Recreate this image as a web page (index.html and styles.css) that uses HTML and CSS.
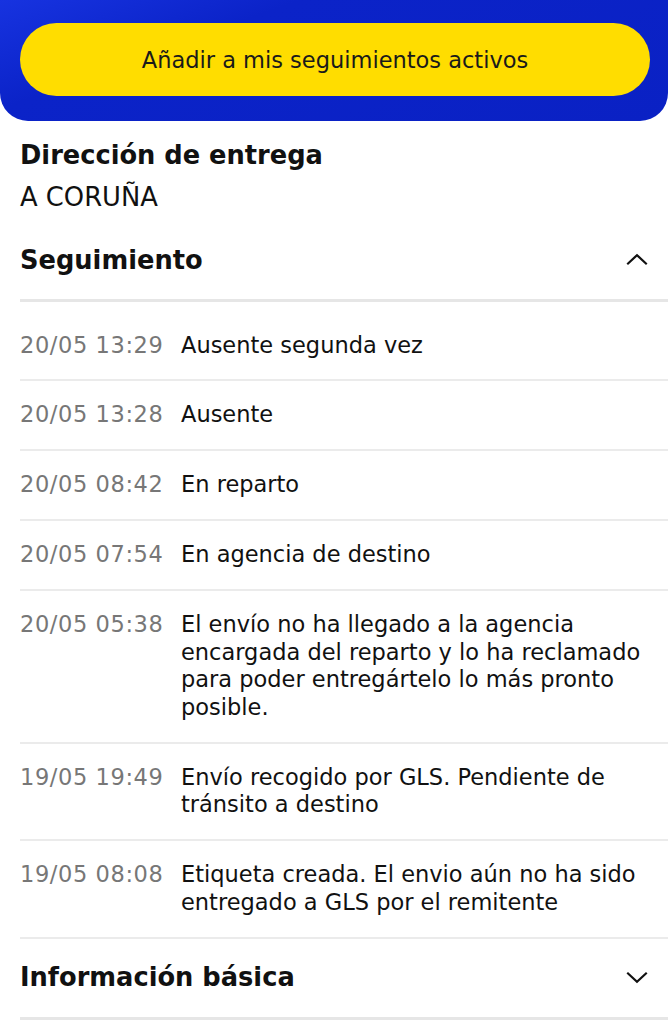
FILE: index.html
```html
<!DOCTYPE html>
<html lang="es">
<head>
    <meta charset="UTF-8">
    <meta name="viewport" content="width=device-width, initial-scale=1.0">
    <title>Seguimiento de envío</title>
    <link rel="stylesheet" href="styles.css">
</head>
<body>
    <header class="top-bar">
        <button class="follow-btn" type="button">Añadir a mis seguimientos activos</button>
    </header>

    <section class="address">
        <h2>Dirección de entrega</h2>
        <p>A CORUÑA</p>
    </section>

    <section class="panel">
        <div class="panel-head open">
            <h2>Seguimiento</h2>
            <svg class="chevron" viewBox="0 0 24 24" width="26" height="26">
                <path d="M3 16 L12 7.5 L21 16" fill="none" stroke="#111" stroke-width="2"/>
            </svg>
        </div>
        <ul class="events">
            <li class="first">
                <span class="time">20/05 13:29</span>
                <span class="text">Ausente segunda vez</span>
            </li>
            <li>
                <span class="time">20/05 13:28</span>
                <span class="text">Ausente</span>
            </li>
            <li>
                <span class="time">20/05 08:42</span>
                <span class="text">En reparto</span>
            </li>
            <li>
                <span class="time">20/05 07:54</span>
                <span class="text">En agencia de destino</span>
            </li>
            <li>
                <span class="time">20/05 05:38</span>
                <span class="text">El envío no ha llegado a la agencia encargada del reparto y lo ha reclamado para poder entregártelo lo más pronto posible.</span>
            </li>
            <li>
                <span class="time">19/05 19:49</span>
                <span class="text">Envío recogido por GLS. Pendiente de tránsito a destino</span>
            </li>
            <li>
                <span class="time">19/05 08:08</span>
                <span class="text">Etiqueta creada. El envio aún no ha sido entregado a GLS por el remitente</span>
            </li>
        </ul>
    </section>

    <section class="panel">
        <div class="panel-head">
            <h2>Información básica</h2>
            <svg class="chevron" viewBox="0 0 24 24" width="26" height="26">
                <path d="M3 8 L12 16.5 L21 8" fill="none" stroke="#111" stroke-width="2"/>
            </svg>
        </div>
    </section>
</body>
</html>
```

FILE: styles.css
```css
body {
    margin: 0;
    padding: 0;
    background-color: #fff;
    color: #111;
    font-family: "DejaVu Sans", Verdana, sans-serif;
}
.top-bar {
    background: linear-gradient(160deg, #1733e0 0%, #0b23c8 30%, #0a21c4 100%);
    border-radius: 0 0 28px 28px;
    padding: 23px 18px 25px 20px;
}
.follow-btn {
    display: block;
    width: 100%;
    height: 73px;
    border: none;
    border-radius: 37px;
    background-color: #ffdd00;
    color: #1a1a1a;
    font-family: inherit;
    font-size: 22.5px;
    cursor: pointer;
}
.address {
    padding: 19px 0 0 20px;
}
.address h2 {
    margin: 0;
    font-size: 25.7px;
    line-height: 30px;
}
.address p {
    margin: 11px 0 0;
    font-size: 25.8px;
    line-height: 32px;
}
.panel {
    padding-left: 20px;
}
.panel-head {
    display: flex;
    align-items: center;
    justify-content: space-between;
    box-sizing: border-box;
    height: 81px;
    padding: 0 18px 2px 0;
    border-bottom: 3px solid #e6e6e6;
}
.panel-head.open {
    margin-top: 8px;
    padding-bottom: 0;
}
.panel-head h2 {
    margin: 0;
    font-size: 25.7px;
}
.chevron {
    display: block;
}
.events {
    list-style: none;
    margin: 0;
    padding: 0;
}
.events li {
    display: flex;
    padding: 20.25px 20px 20.25px 0;
    border-bottom: 2px solid #ebebeb;
    font-size: 22.5px;
    line-height: 27.5px;
}
.events li.first {
    padding-top: 30px;
    padding-bottom: 19.5px;
}
.time {
    flex: 0 0 161px;
    color: #777;
    letter-spacing: 0.6px;
}
.text {
    flex: 1;
}
```
